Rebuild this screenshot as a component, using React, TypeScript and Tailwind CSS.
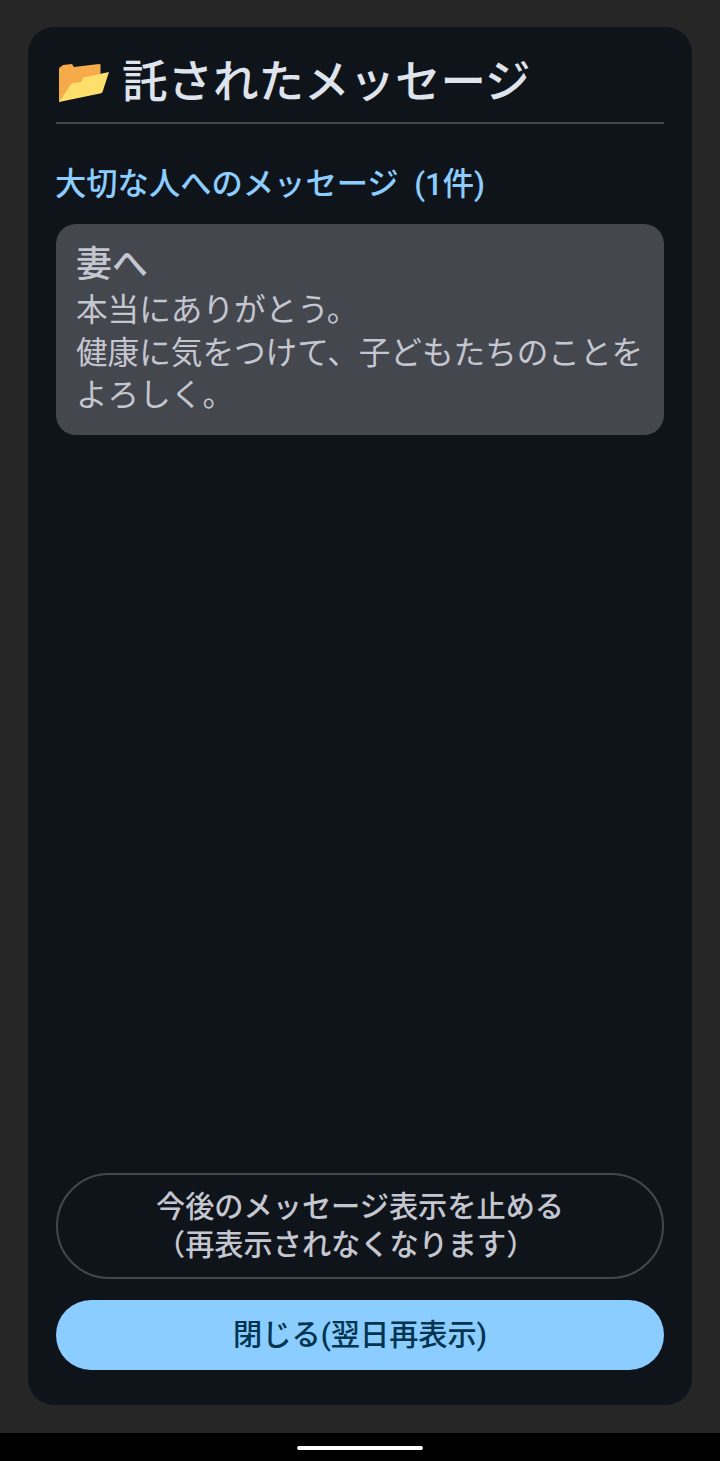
const font = { fontFamily: '"Roboto", "Noto Sans CJK JP", sans-serif' };

function FolderIcon() {
    return (
        <svg width="50" height="39" viewBox="0 0 50 39" className="shrink-0 ml-[3px]">
            <path d="M0 6Q0 4 3 3L4 2 13 1 15 4 40 1Q41.500 1 41.500 2V24L0 39z" fill="#f6ab4a" />
            <path d="M0 39 12 21Q13 20 15 20L22 19 24 15Q25 14 27 14L50 9 43.500 29Q43 30 41 30.500L0 39z" fill="#ffdf6b" />
        </svg>
    );
}

export default function App() {
    return (
        <div className="w-[720px] h-[1461px] flex flex-col bg-black" style={font}>
            <div className="h-[1433px] bg-[#262626] pt-[27px] px-[28px]">
                <div className="h-[1378px] bg-[#0f141b] rounded-[26px] px-[28px] pb-[35px] flex flex-col">
                    <div className="h-[97px] border-b-2 border-[#44474e] flex items-center pt-[16px] gap-[13px] font-medium text-[45.5px] text-[#dfe3ec]">
                        <FolderIcon />
                        <h1 className="leading-none whitespace-nowrap">託されたメッセージ</h1>
                    </div>
                    <h2 className="mt-[41px] -ml-[1px] text-[31.3px] leading-[40px] font-medium text-[#8bcdff] whitespace-nowrap">
                        大切な人へのメッセージ&nbsp; (1件)
                    </h2>
                    <div className="mt-[19px] h-[211px] bg-[#44474e] rounded-[20px] px-[21px] pt-[18px] text-[#c4c6d0]">
                        <div className="text-[36px] leading-[47px] font-medium -ml-[1px]">妻へ</div>
                        <p className="mt-[1px] text-[31.6px] leading-[42.5px] -ml-[1px] whitespace-nowrap">
                            本当にありがとう。
                            <br />
                            健康に気をつけて、子どもたちのことを
                            <br />
                            よろしく。
                        </p>
                    </div>
                    <div className="flex-1" />
                    <button className="h-[106px] border-2 border-[#44474e] rounded-full text-[29.2px] leading-[38px] font-medium text-[#c4c6d0] text-center">
                        <span className="inline-block text-left">
                            今後のメッセージ表示を止める
                            <br />
                            （再表示されなくなります）
                        </span>
                    </button>
                    <button className="mt-[21px] h-[70px] bg-[#8bcdff] rounded-full text-[29.2px] font-medium text-[#00344f] text-center">
                        <span className="relative top-[1px]">閉じる(翌日再表示)</span>
                    </button>
                </div>
            </div>
            <div className="flex-1 flex justify-center pt-[13px]">
                <div className="w-[126px] h-[4px] bg-white rounded-full" />
            </div>
        </div>
    );
}
